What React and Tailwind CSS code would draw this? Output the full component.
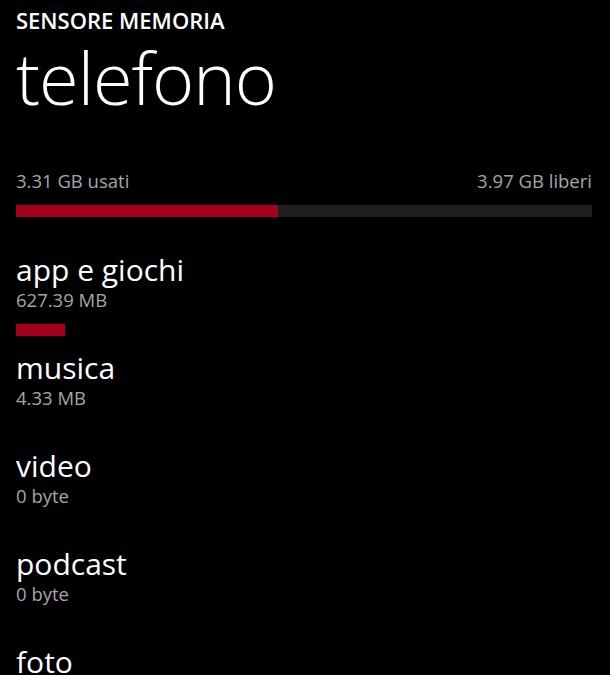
import React from 'react';

const items = [
  { name: 'app e giochi', size: '627.39 MB', bar: 49 },
  { name: 'musica', size: '4.33 MB', bar: 0 },
  { name: 'video', size: '0 byte', bar: 0 },
  { name: 'podcast', size: '0 byte', bar: 0 },
  { name: 'foto', size: '0 byte', bar: 0 },
];

export default function App() {
  return (
    <div className="w-[610px] h-[675px] overflow-hidden bg-black text-white" style={{ fontFamily: '"Open Sans", "Noto Sans", sans-serif' }}>
      <div className="pl-[16px] pr-[18px]">
        <div className="pt-[6px] text-[22px] leading-[28px] font-semibold">SENSORE MEMORIA</div>
        <div className="text-[72px] leading-[80px] font-light mt-[3px] tracking-[-1px]">telefono</div>

        <div className="mt-[52px] flex justify-between text-[18.5px] leading-[24px] text-[#a6a6a6]">
          <span>3.31 GB usati</span>
          <span>3.97 GB liberi</span>
        </div>
        <div className="mt-[12px] h-[12px] bg-[#1f1f1f] flex">
          <div className="w-[262px] h-full bg-[#a5001e]" />
        </div>

        <div className="mt-[36px] flex flex-col">
          {items.map((it) => (
            <div key={it.name} className="h-[98px]">
              <div className="text-[30px] leading-[34px]">{it.name}</div>
              <div className="mt-[2px] text-[18.5px] leading-[22px] text-[#a6a6a6]">{it.size}</div>
              <div className="mt-[13px] h-[12px]">
                {it.bar > 0 && <div className="h-full bg-[#a5001e]" style={{ width: it.bar }} />}
              </div>
            </div>
          ))}
        </div>
      </div>
    </div>
  );
}
